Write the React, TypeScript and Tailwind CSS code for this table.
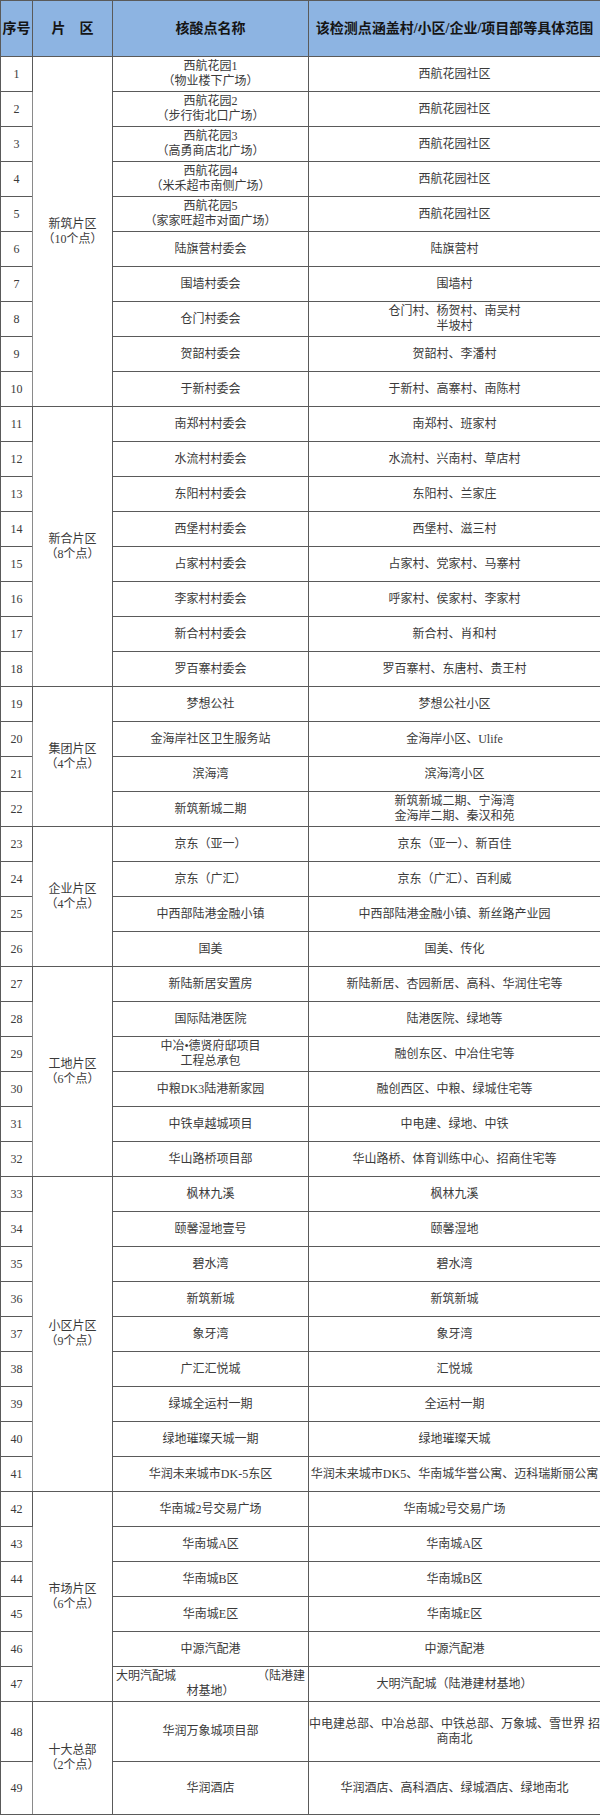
type Row = { no: number; site: string[]; scope: string[]; h?: string }

const groups: { name: string; count: string; span: number }[] = [
  { name: "新筑片区", count: "（10个点）", span: 10 },
  { name: "新合片区", count: "（8个点）", span: 8 },
  { name: "集团片区", count: "（4个点）", span: 4 },
  { name: "企业片区", count: "（4个点）", span: 4 },
  { name: "工地片区", count: "（6个点）", span: 6 },
  { name: "小区片区", count: "（9个点）", span: 9 },
  { name: "市场片区", count: "（6个点）", span: 6 },
  { name: "十大总部", count: "（2个点）", span: 2 },
]

const rows: Row[] = [
  { no: 1, site: ["西航花园1", "（物业楼下广场）"], scope: ["西航花园社区"] },
  { no: 2, site: ["西航花园2", "（步行街北口广场）"], scope: ["西航花园社区"] },
  { no: 3, site: ["西航花园3", "（高勇商店北广场）"], scope: ["西航花园社区"] },
  { no: 4, site: ["西航花园4", "（米禾超市南侧广场）"], scope: ["西航花园社区"] },
  { no: 5, site: ["西航花园5", "（家家旺超市对面广场）"], scope: ["西航花园社区"] },
  { no: 6, site: ["陆旗营村委会"], scope: ["陆旗营村"] },
  { no: 7, site: ["围墙村委会"], scope: ["围墙村"] },
  { no: 8, site: ["仓门村委会"], scope: ["仓门村、杨贺村、南吴村", "半坡村"] },
  { no: 9, site: ["贺韶村委会"], scope: ["贺韶村、李潘村"] },
  { no: 10, site: ["于新村委会"], scope: ["于新村、高寨村、南陈村"] },
  { no: 11, site: ["南郑村村委会"], scope: ["南郑村、班家村"] },
  { no: 12, site: ["水流村村委会"], scope: ["水流村、兴南村、草店村"] },
  { no: 13, site: ["东阳村村委会"], scope: ["东阳村、兰家庄"] },
  { no: 14, site: ["西堡村村委会"], scope: ["西堡村、滋三村"] },
  { no: 15, site: ["占家村村委会"], scope: ["占家村、党家村、马寨村"] },
  { no: 16, site: ["李家村村委会"], scope: ["呼家村、侯家村、李家村"] },
  { no: 17, site: ["新合村村委会"], scope: ["新合村、肖和村"] },
  { no: 18, site: ["罗百寨村委会"], scope: ["罗百寨村、东唐村、贵王村"] },
  { no: 19, site: ["梦想公社"], scope: ["梦想公社小区"] },
  { no: 20, site: ["金海岸社区卫生服务站"], scope: ["金海岸小区、Ulife"] },
  { no: 21, site: ["滨海湾"], scope: ["滨海湾小区"] },
  { no: 22, site: ["新筑新城二期"], scope: ["新筑新城二期、宁海湾", "金海岸二期、秦汉和苑"] },
  { no: 23, site: ["京东（亚一）"], scope: ["京东（亚一）、新百佳"] },
  { no: 24, site: ["京东（广汇）"], scope: ["京东（广汇）、百利威"] },
  { no: 25, site: ["中西部陆港金融小镇"], scope: ["中西部陆港金融小镇、新丝路产业园"] },
  { no: 26, site: ["国美"], scope: ["国美、传化"] },
  { no: 27, site: ["新陆新居安置房"], scope: ["新陆新居、杏园新居、高科、华润住宅等"] },
  { no: 28, site: ["国际陆港医院"], scope: ["陆港医院、绿地等"] },
  { no: 29, site: ["中冶•德贤府邸项目", "工程总承包"], scope: ["融创东区、中冶住宅等"] },
  { no: 30, site: ["中粮DK3陆港新家园"], scope: ["融创西区、中粮、绿城住宅等"] },
  { no: 31, site: ["中铁卓越城项目"], scope: ["中电建、绿地、中铁"] },
  { no: 32, site: ["华山路桥项目部"], scope: ["华山路桥、体育训练中心、招商住宅等"] },
  { no: 33, site: ["枫林九溪"], scope: ["枫林九溪"] },
  { no: 34, site: ["颐馨湿地壹号"], scope: ["颐馨湿地"] },
  { no: 35, site: ["碧水湾"], scope: ["碧水湾"] },
  { no: 36, site: ["新筑新城"], scope: ["新筑新城"] },
  { no: 37, site: ["象牙湾"], scope: ["象牙湾"] },
  { no: 38, site: ["广汇汇悦城"], scope: ["汇悦城"] },
  { no: 39, site: ["绿城全运村一期"], scope: ["全运村一期"] },
  { no: 40, site: ["绿地璀璨天城一期"], scope: ["绿地璀璨天城"] },
  { no: 41, site: ["华润未来城市DK-5东区"], scope: ["华润未来城市DK5、华南城华誉公寓、迈科瑞斯丽公寓"] },
  { no: 42, site: ["华南城2号交易广场"], scope: ["华南城2号交易广场"] },
  { no: 43, site: ["华南城A区"], scope: ["华南城A区"] },
  { no: 44, site: ["华南城B区"], scope: ["华南城B区"] },
  { no: 45, site: ["华南城E区"], scope: ["华南城E区"] },
  { no: 46, site: ["中源汽配港"], scope: ["中源汽配港"] },
  { no: 47, site: [], scope: ["大明汽配城（陆港建材基地）"] },
  { no: 48, site: ["华润万象城项目部"], scope: ["中电建总部、中冶总部、中铁总部、万象城、雪世界 招", "商南北"], h: "h-[60px]" },
  { no: 49, site: ["华润酒店"], scope: ["华润酒店、高科酒店、绿城酒店、绿地南北"], h: "h-[53px]" },
]

// which row starts a group
const groupStart: Record<number, number> = {}
let acc = 1
groups.forEach((g, i) => {
  groupStart[acc] = i
  acc += g.span
})

function Lines({ lines }: { lines: string[] }) {
  return (
    <div className="flex flex-col items-center leading-[15px] whitespace-nowrap">
      {lines.map((l, i) => (
        <span key={i}>{l}</span>
      ))}
    </div>
  )
}

export default function App() {
  const cell = "border border-[#5a5a5a] text-center align-middle p-0"

  return (
    <div
      className="w-[600px] bg-white text-[12px] text-[#3a3a3a]"
      style={{ fontFamily: '"Liberation Serif", "Noto Sans CJK SC", serif' }}
    >
      <table className="w-[600px] table-fixed border-collapse">
        <colgroup>
          <col className="w-[32px]" />
          <col className="w-[80px]" />
          <col className="w-[196px]" />
          <col className="w-[292px]" />
        </colgroup>
        <thead>
          <tr className="h-[56px] bg-[#8db4e2] text-[14px] font-bold text-[#151515]">
            <th className={cell}>序号</th>
            <th className={cell}>片　区</th>
            <th className={cell}>核酸点名称</th>
            <th className={`${cell} whitespace-nowrap`}>该检测点涵盖村/小区/企业/项目部等具体范围</th>
          </tr>
        </thead>
        <tbody>
          {rows.map((r) => {
            const gi = groupStart[r.no]
            const g = gi !== undefined ? groups[gi] : null
            return (
              <tr key={r.no} className={r.h ?? "h-[35px]"}>
                <td className={cell}>{r.no}</td>
                {g && (
                  <td rowSpan={g.span} className={`${cell} border-l-[#8a8a8a]`}>
                    <Lines lines={[g.name, g.count]} />
                  </td>
                )}
                <td className={cell}>
                  {r.no === 47 ? (
                    <div className="flex flex-col leading-[15px] px-[3px]">
                      <div className="flex justify-between">
                        <span>大明汽配城</span>
                        <span>（陆港建</span>
                      </div>
                      <span className="text-center">材基地）</span>
                    </div>
                  ) : (
                    <Lines lines={r.site} />
                  )}
                </td>
                <td className={cell}>
                  <Lines lines={r.scope} />
                </td>
              </tr>
            )
          })}
        </tbody>
      </table>
    </div>
  )
}
